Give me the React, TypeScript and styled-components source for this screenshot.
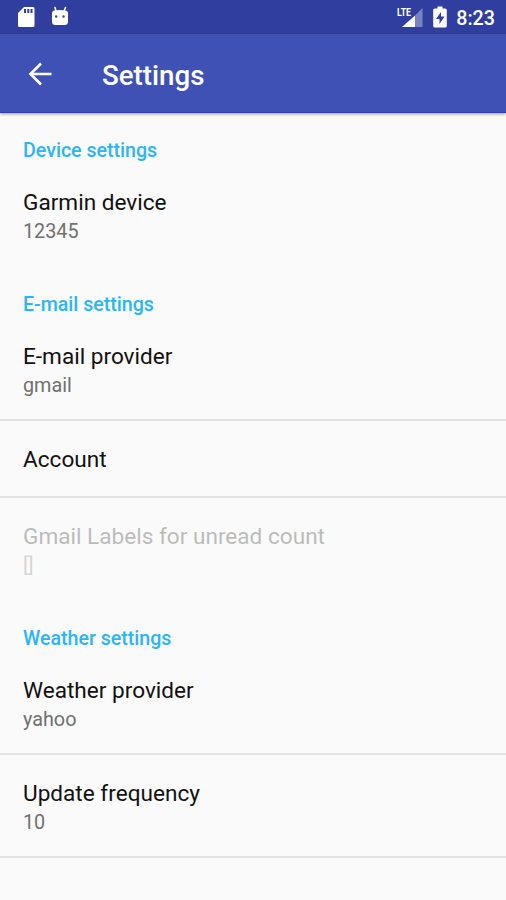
import React from "react";
import styled, { createGlobalStyle } from "styled-components";

const GlobalStyle = createGlobalStyle`
  body { margin: 0; background: #fafafa; font-family: Roboto, sans-serif; }
`;

const Screen = styled.div`
  width: 506px;
  height: 900px;
  overflow: hidden;
  background: #fafafa;
`;

const StatusBar = styled.div`
  height: 34px;
  box-sizing: border-box;
  padding: 0 11px 0 17px;
  display: flex;
  align-items: center;
  justify-content: space-between;
  background: #303f9f;
  color: #fff;
`;

const IconGroup = styled.div<{ $gap: number }>`
  display: flex;
  align-items: center;
  gap: ${(p) => p.$gap}px;
  svg { display: block; }
`;

const Clock = styled.span`
  font-size: 19.7px;
  font-weight: 500;
  line-height: 34px;
  padding-top: 3px;
`;

const Toolbar = styled.header`
  height: 79px;
  box-sizing: border-box;
  padding-left: 28px;
  display: flex;
  align-items: center;
  gap: 50px;
  background: #3f51b5;
  border-bottom: 1px solid #3041a4;
  box-shadow: 0 1px 3px rgba(0, 0, 0, 0.4);
  svg { display: block; }
`;

const Title = styled.h1`
  margin: 5px 0 0;
  font-size: 27.7px;
  font-weight: 500;
  line-height: 32px;
  color: #fff;
`;

const Preferences = styled.main`
  padding-top: 0.6px;
`;

const Category = styled.h2`
  height: 50.9px;
  box-sizing: border-box;
  margin: 0;
  padding: 25.2px 23px 0;
  font-size: 19.6px;
  font-weight: 500;
  line-height: 24px;
  color: #29b6f6;
`;

const Row = styled.div<{ $divider?: boolean; $disabled?: boolean; $single?: boolean }>`
  height: ${(p) => (p.$single ? 77 : 103)}px;
  box-sizing: border-box;
  padding: 24.4px 23px 0;
  border-bottom: 2px solid ${(p) => (p.$divider ? "#e3e3e3" : "transparent")};
  opacity: ${(p) => (p.$disabled ? 0.27 : 1)};
`;

const Label = styled.div`
  font-size: 22.6px;
  line-height: 28px;
  color: #111;
`;

const Summary = styled.div`
  margin-top: 1px;
  font-size: 19.8px;
  line-height: 28px;
  color: #707070;
`;

const SdCard = () => (
  <svg width="18" height="22" viewBox="0 0 18 22">
    <path fill="#fff" fillRule="evenodd" d="M7 1h9q1.500 0 1.500 1.500v17q0 1.500-1.500 1.500H2.500Q1 21 1 19.500V7zM7 3v4h2V3zM10.300 3v4h2V3zM13.500 3v4h2V3z" />
  </svg>
);

const Droid = () => (
  <svg width="18" height="22" viewBox="0 0 18 22">
    <path d="M5 5L4 1.500M13 5L14.500 1.500" stroke="#fff" strokeWidth="1.500" strokeLinecap="round" />
    <path fill="#fff" fillRule="evenodd" d="M3 4.500q6-1 12 0Q17 5 17 7v8.500q0 3.500-3.500 3.500h-9Q1 19 1 15.500V7q0-2 2-2.500zM4 10.500a1.200 1.200 0 1 0 2.400 0 1.200 1.200 0 1 0-2.400 0zM11.400 10.500a1.200 1.200 0 1 0 2.400 0 1.200 1.200 0 1 0-2.400 0z" />
  </svg>
);

const SignalText = styled.text`
  font: 700 11px Roboto, sans-serif;
  fill: #fff;
`;

const Signal = () => (
  <svg width="26" height="22" viewBox="0 0 26 22">
    <path d="M25.500 2v19H18V9.500z" fill="#7982c1" />
    <path d="M18 9.500V21H5z" fill="#fff" />
    <SignalText x="0" y="10" textLength="14" lengthAdjust="spacingAndGlyphs">LTE</SignalText>
  </svg>
);

const Battery = () => (
  <svg width="14" height="22" viewBox="0 0 14 22">
    <path fill="#fff" fillRule="evenodd" d="M4.500 .5h5v2H12q1.800 0 1.800 1.500v16q0 1.500-1.800 1.500H2Q.2 21.500.2 20V4Q.2 2.500 2 2.500h2.500zM8 6l-5 7h3.500v5l5-7.500H8z" />
  </svg>
);

const BackArrow = () => (
  <svg width="24" height="26" viewBox="0 0 24 26" fill="none" stroke="#fff" strokeWidth="2.600">
    <path d="M23.500 14H2.500M13 3.500L2.500 14L13 24.500" />
  </svg>
);

type Item = { label: string; summary?: string; divider?: boolean; disabled?: boolean };

const sections: { name: string; items: Item[] }[] = [
  { name: "Device settings", items: [{ label: "Garmin device", summary: "12345" }] },
  {
    name: "E-mail settings",
    items: [
      { label: "E-mail provider", summary: "gmail", divider: true },
      { label: "Account", divider: true },
      { label: "Gmail Labels for unread count", summary: "[]", disabled: true },
    ],
  },
  {
    name: "Weather settings",
    items: [
      { label: "Weather provider", summary: "yahoo", divider: true },
      { label: "Update frequency", summary: "10", divider: true },
    ],
  },
];

export default function App() {
  return (
    <Screen>
      <GlobalStyle />
      <StatusBar>
        <IconGroup $gap={16}>
          <SdCard />
          <Droid />
        </IconGroup>
        <IconGroup $gap={9.5}>
          <Signal />
          <Battery />
          <Clock>8:23</Clock>
        </IconGroup>
      </StatusBar>
      <Toolbar>
        <BackArrow />
        <Title>Settings</Title>
      </Toolbar>
      <Preferences>
        {sections.map((s) => (
          <section key={s.name}>
            <Category>{s.name}</Category>
            {s.items.map((i) => (
              <Row key={i.label} $divider={i.divider} $disabled={i.disabled} $single={!i.summary}>
                <Label>{i.label}</Label>
                {i.summary && <Summary>{i.summary}</Summary>}
              </Row>
            ))}
          </section>
        ))}
      </Preferences>
    </Screen>
  );
}
